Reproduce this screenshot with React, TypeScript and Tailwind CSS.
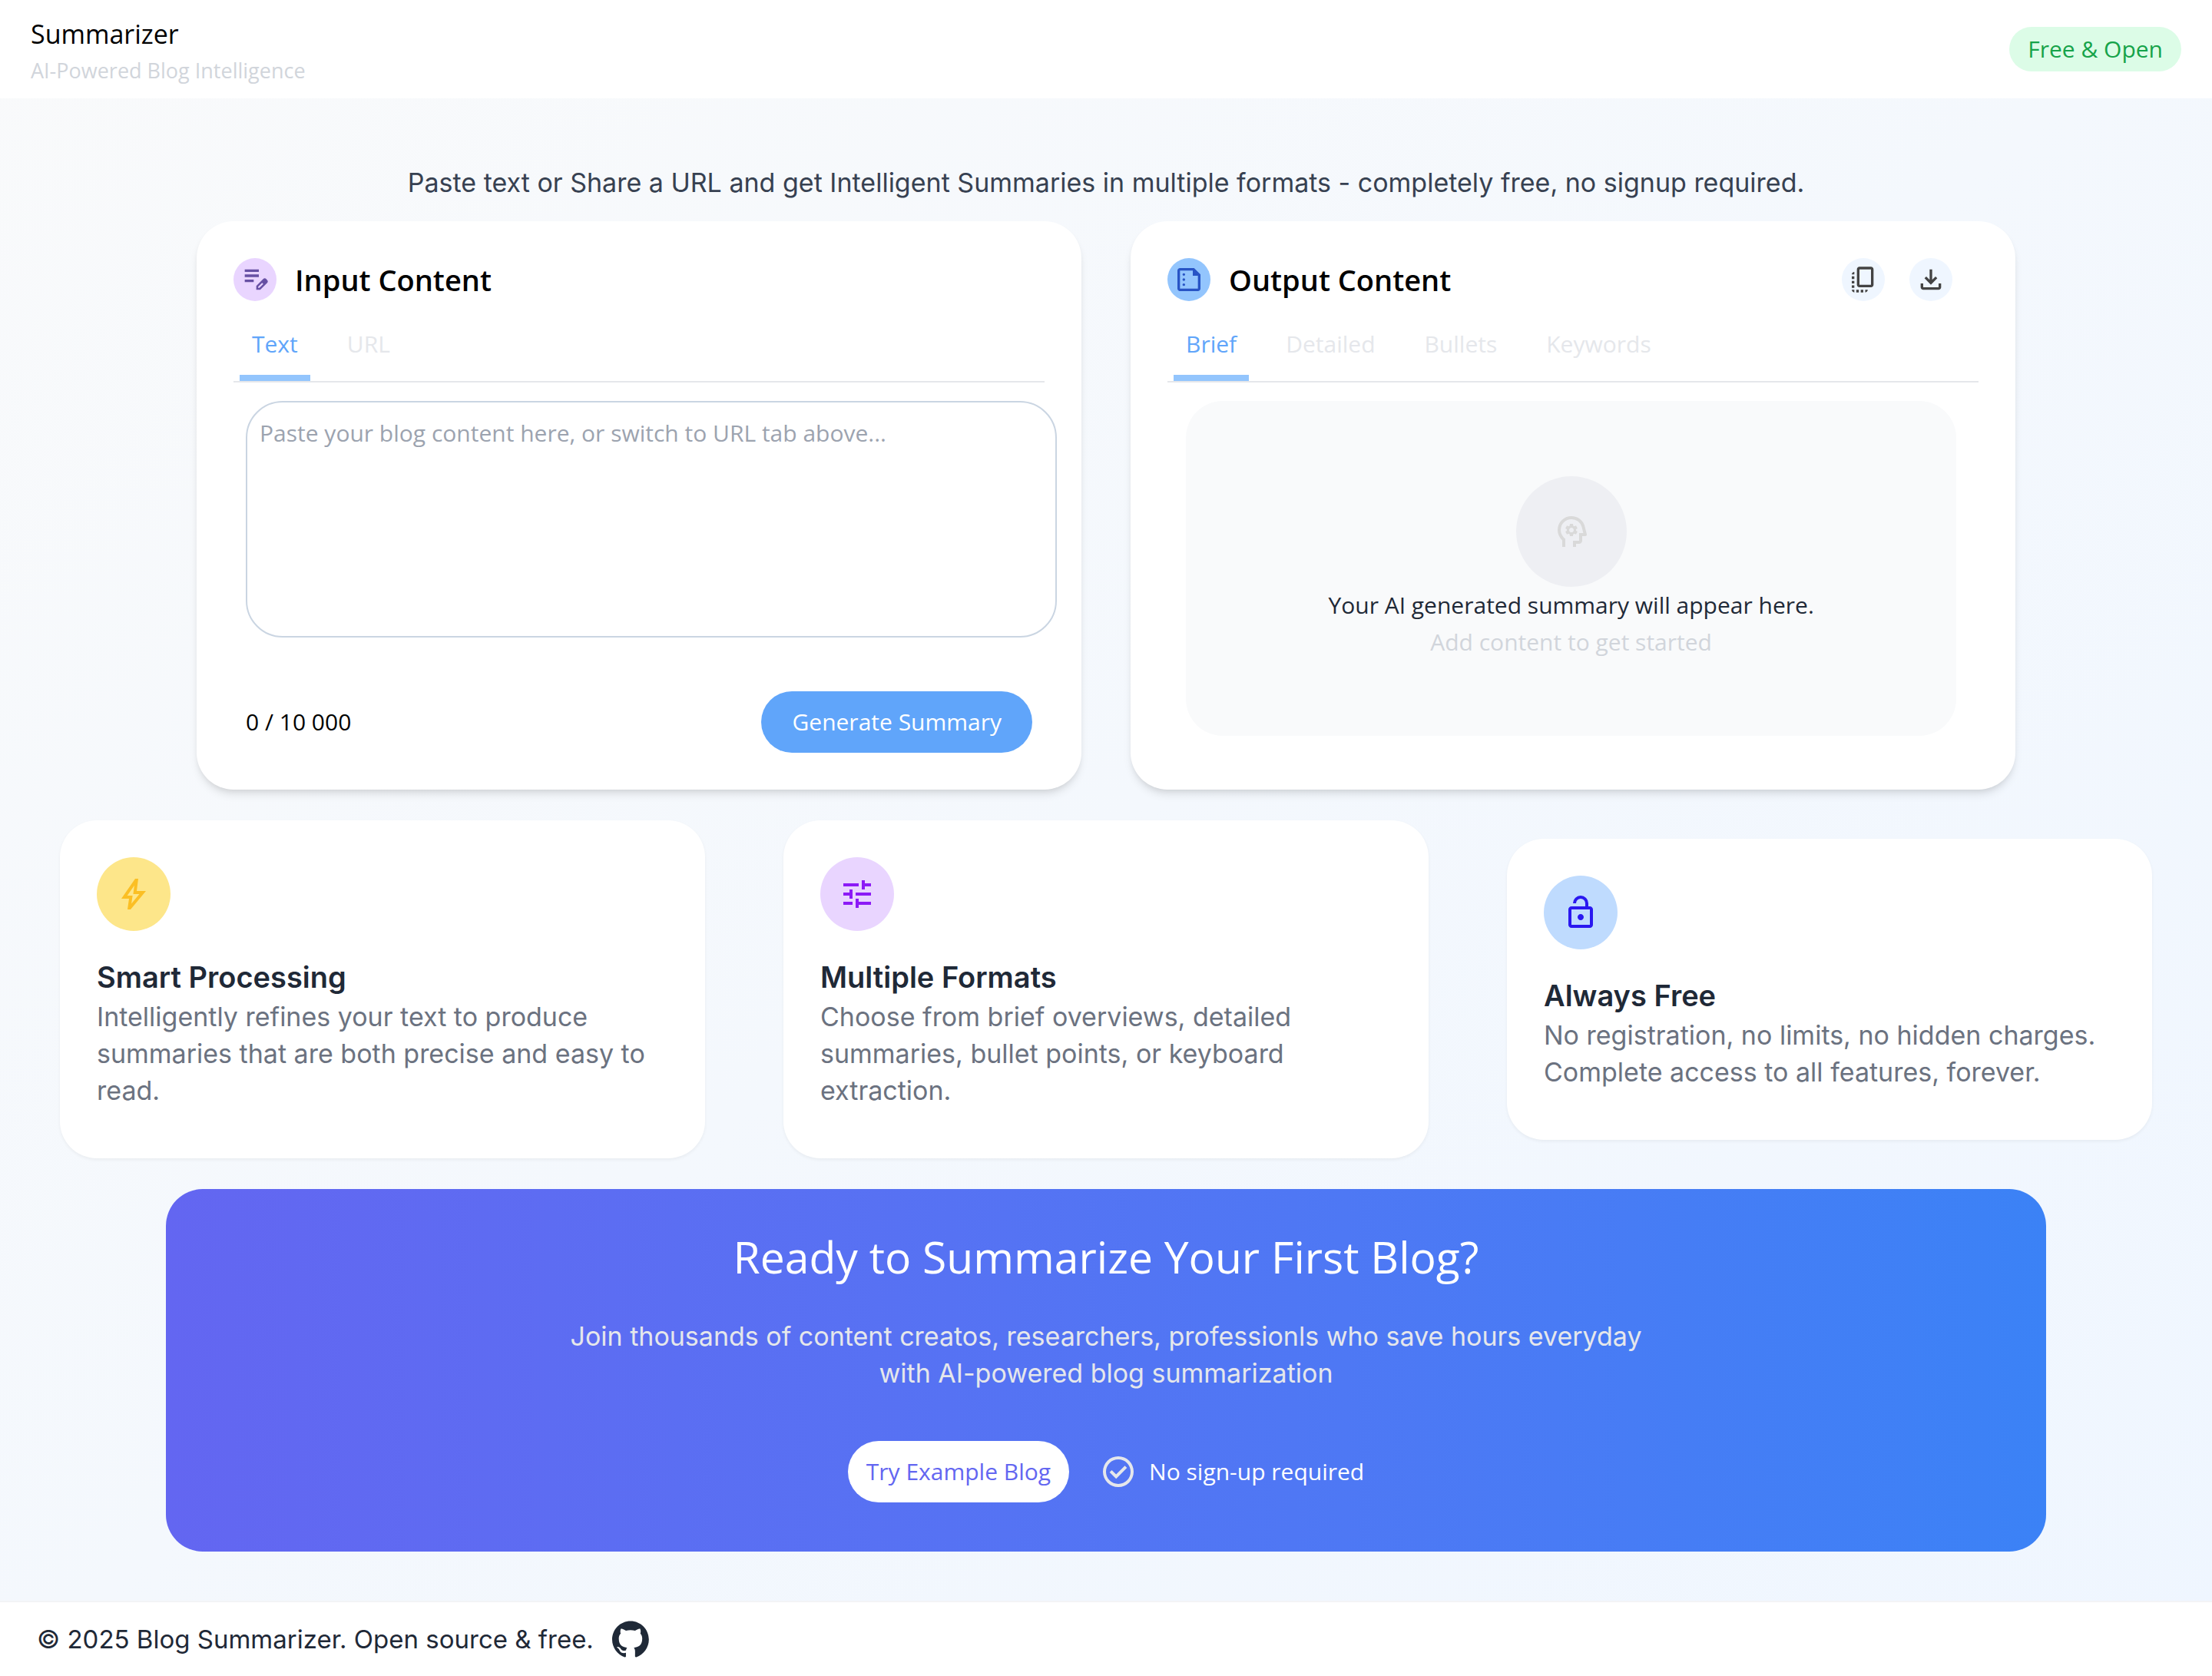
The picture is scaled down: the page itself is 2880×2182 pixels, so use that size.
import React, { useState } from "react";

const ui = "font-['Open_Sans','Noto_Sans',sans-serif]";
const geo = "font-['Inter','Noto_Sans',sans-serif]";

const icons = {
  editNote:
    "M160-400v-80h280v80H160Zm0-160v-80h440v80H160Zm0-160v-80h440v80H160Zm360 560v-123l221-220q9-9 20-13t22-4q12 0 23 4.5t20 13.5l37 37q8 9 12.5 20t4.5 22q0 11-4 22.5T863-380L643-160H520Zm300-263-37-37 37 37ZM580-220h38l121-122-18-19-19-18-122 121v38Zm141-141-19-18 37 37-18-19Z",
  summarize:
    "M320-600q17 0 28.5-11.5T360-640q0-17-11.5-28.5T320-680q-17 0-28.5 11.5T280-640q0 17 11.5 28.5T320-600Zm0 160q17 0 28.5-11.5T360-480q0-17-11.5-28.5T320-520q-17 0-28.5 11.5T280-480q0 17 11.5 28.5T320-440Zm0 160q17 0 28.5-11.5T360-320q0-17-11.5-28.5T320-360q-17 0-28.5 11.5T280-320q0 17 11.5 28.5T320-280ZM200-120q-33 0-56.5-23.5T120-200v-560q0-33 23.5-56.5T200-840h440l200 200v440q0 33-23.5 56.5T760-120H200Zm0-80h560v-400H600v-160H200v560Zm0-560v160-160 560-560Z",
  download:
    "M480-320 280-520l56-58 104 104v-326h80v326l104-104 56 58-200 200ZM240-160q-33 0-56.5-23.5T160-240v-120h80v120h480v-120h80v120q0 33-23.5 56.5T720-160H240Z",
  psychology:
    "M240-80v-172q-57-52-88.5-121.5T120-520q0-150 105-255t255-105q125 0 221.5 73.5T827-615l52 205q5 19-7 34.5T840-360h-80v120q0 33-23.5 56.5T680-160h-80v80h-80v-160h160v-200h108l-38-155q-23-91-98-148t-172-57q-116 0-198 81t-82 197q0 60 24.5 114t69.5 96l26 24v208h-80Zm254-360Zm-54 80h80l6-50q8-3 14.5-7t11.5-9l46 20 40-68-40-30q2-8 2-16t-2-16l40-30-40-68-46 20q-5-5-11.5-9t-14.5-7l-6-50h-80l-6 50q-8 3-14.5 7t-11.5 9l-46-20-40 68 40 30q-2 8-2 16t2 16l-40 30 40 68 46-20q5 5 11.5 9t14.5 7l6 50Zm40-100q-25 0-42.5-17.5T420-520q0-25 17.5-42.5T480-580q25 0 42.5 17.5T540-520q0 25-17.5 42.5T480-460Z",
  bolt: "m422-232 207-248H469l29-227-185 267h139l-30 208ZM320-80l40-280H160l360-520h80l-40 320h240L400-80h-80Zm151-390Z",
  tune: "M440-120v-240h80v80h320v80H520v80h-80Zm-320-80v-80h240v80H120Zm160-160v-80H120v-80h160v-80h80v240h-80Zm160-80v-80h400v80H440Zm160-160v-240h80v80h160v80H680v80h-80Zm-480-80v-80h400v80H120Z",
  lockOpen:
    "M240-640h360v-80q0-50-35-85t-85-35q-50 0-85 35t-35 85h-80q0-83 58.5-141.5T480-920q83 0 141.5 58.5T680-720v80h40q33 0 56.5 23.5T800-560v400q0 33-23.5 56.5T720-80H240q-33 0-56.5-23.5T160-160v-400q0-33 23.5-56.5T240-640Zm0 480h480v-400H240v400Zm240-120q33 0 56.5-23.5T560-360q0-33-23.5-56.5T480-440q-33 0-56.5 23.5T400-360q0 33 23.5 56.5T480-280ZM240-160v-400 400Z",
  checkCircle:
    "m424-296 282-282-56-56-226 226-114-114-56 56 170 170Zm56 216q-83 0-156-31.5T197-197q-54-54-85.5-127T80-480q0-83 31.5-156T197-763q54-54 127-85.5T480-880q83 0 156 31.5T763-763q54 54 85.5 127T880-480q0 83-31.5 156T763-197q-54 54-127 85.5T480-80Zm0-80q134 0 227-93t93-227q0-134-93-227t-227-93q-134 0-227 93t-93 227q0 134 93 227t227 93Zm0-320Z",
};

function Icon({ d, className }: { d: string; className: string }) {
  return (
    <svg viewBox="0 -960 960 960" fill="currentColor" className={className} aria-hidden="true">
      <path d={d} />
    </svg>
  );
}

function CopyAllIcon() {
  return (
    <svg viewBox="0 0 24 24" fill="currentColor" className="size-10" aria-hidden="true">
      <path d="M18 2H9c-1.1 0-2 .9-2 2v12c0 1.1.9 2 2 2h9c1.1 0 2-.9 2-2V4c0-1.1-.9-2-2-2zm0 14H9V4h9v12zM3 15v-2h2v2H3zm0-5.5h2v2H3v-2zM10 20h2v2h-2v-2zm-7-1.5v-2h2v2H3zM5 22c-1.1 0-2-.9-2-2h2v2zm3.5 0h-2v-2h2v2zm5 0v-2h2c0 1.1-.9 2-2 2zM5 6v2H3c0-1.1.9-2 2-2z" />
    </svg>
  );
}

function GitHubIcon() {
  return (
    <svg viewBox="0 0 98 96" fill="currentColor" className="size-12" aria-hidden="true">
      <path
        fillRule="evenodd"
        clipRule="evenodd"
        d="M48.854 0C21.839 0 0 22 0 49.217c0 21.756 13.993 40.172 33.405 46.69 2.427.49 3.316-1.059 3.316-2.362 0-1.141-.08-5.052-.08-9.127-13.59 2.934-16.42-5.867-16.42-5.867-2.184-5.704-5.42-7.17-5.42-7.17-4.448-3.015.324-3.015.324-3.015 4.934.326 7.523 5.052 7.523 5.052 4.367 7.496 11.404 5.378 14.235 4.074.404-3.178 1.699-5.378 3.074-6.6-10.839-1.141-22.243-5.378-22.243-24.283 0-5.378 1.94-9.778 5.014-13.2-.485-1.222-2.184-6.275.486-13.038 0 0 4.125-1.304 13.426 5.052a46.97 46.97 0 0 1 12.214-1.63c4.125 0 8.33.571 12.213 1.63 9.302-6.356 13.427-5.052 13.427-5.052 2.67 6.763.97 11.816.485 13.038 3.155 3.422 5.015 7.822 5.015 13.2 0 18.905-11.404 23.06-22.324 24.283 1.78 1.548 3.316 4.481 3.316 9.126 0 6.6-.08 11.897-.08 13.526 0 1.304.89 2.853 3.316 2.364 19.412-6.52 33.405-24.935 33.405-46.691C97.707 22 75.788 0 48.854 0z"
      />
    </svg>
  );
}

function Tabs({
  label,
  tabs,
  active,
  onSelect,
}: {
  label: string;
  tabs: string[];
  active: string;
  onSelect: (tab: string) => void;
}) {
  return (
    <div role="tablist" aria-label={label} className="mt-8 flex gap-8 border-b-2 border-gray-200 px-2">
      {tabs.map((tab) => (
        <button
          key={tab}
          type="button"
          role="tab"
          aria-selected={tab === active}
          onClick={() => onSelect(tab)}
          className={
            tab === active
              ? "border-b-8 border-[#93c5fd] px-4 pb-4 text-[#60a5fa]"
              : "border-b-8 border-transparent px-4 pb-4 text-gray-200"
          }
        >
          {tab}
        </button>
      ))}
    </div>
  );
}

const cardClass =
  "flex-1 rounded-[48px] bg-white p-12 shadow-[0_8px_12px_-2px_rgba(0,0,0,0.1),0_4px_8px_-4px_rgba(0,0,0,0.1)]";

function InputCard() {
  const [tab, setTab] = useState("Text");
  const [text, setText] = useState("");
  return (
    <section className={cardClass}>
      <div className="flex items-center gap-6">
        <span className="flex size-14 items-center justify-center rounded-full bg-[#e9d5ff] text-[#6750a4]">
          <Icon d={icons.editNote} className="size-10" />
        </span>
        <h2 className="text-[38px] leading-14 font-semibold text-black">Input Content</h2>
      </div>
      <Tabs label="Input type" tabs={["Text", "URL"]} active={tab} onSelect={setTab} />
      <textarea
        aria-label="Blog content"
        value={text}
        onChange={(e) => setText(e.target.value)}
        placeholder="Paste your blog content here, or switch to URL tab above..."
        className="mt-6 ml-4 block h-[308px] w-full resize-none rounded-[48px] border-2 border-slate-300 bg-white p-4 text-black placeholder:text-[#9ca3af]"
      />
      <div className="mx-4 mt-[70px] flex items-center justify-between">
        <p className="text-black">{text.length} / 10 000</p>
        <button type="button" className="rounded-full bg-[#60a5fa] px-10 py-4 text-white">
          Generate Summary
        </button>
      </div>
    </section>
  );
}

function OutputCard() {
  const [tab, setTab] = useState("Brief");
  return (
    <section className={cardClass}>
      <div className="flex items-center gap-6">
        <span className="flex size-14 items-center justify-center rounded-full bg-[#93c5fd] text-[#2854c5]">
          <Icon d={icons.summarize} className="size-10" />
        </span>
        <h2 className="text-[38px] leading-14 font-semibold text-black">Output Content</h2>
        <div className="ml-auto flex gap-8 pr-[34px] text-[#434343]">
          <button
            type="button"
            aria-label="Copy summary"
            className="flex size-14 items-center justify-center rounded-full bg-[#eff6ff]"
          >
            <CopyAllIcon />
          </button>
          <button
            type="button"
            aria-label="Download summary"
            className="flex size-14 items-center justify-center rounded-full bg-[#eff6ff]"
          >
            <Icon d={icons.download} className="size-10" />
          </button>
        </div>
      </div>
      <Tabs
        label="Summary format"
        tabs={["Brief", "Detailed", "Bullets", "Keywords"]}
        active={tab}
        onSelect={setTab}
      />
      <div className="mt-6 ml-6 flex w-[95%] flex-col items-center rounded-[48px] bg-[#f9fafb] py-[98px]">
        <span className="flex size-36 items-center justify-center rounded-full bg-[#eeeff3] text-[#d9d9d9]">
          <Icon d={icons.psychology} className="size-12" />
        </span>
        <p className="text-[#1f2937]">Your AI generated summary will appear here.</p>
        <p className="text-[#d1d5db]">Add content to get started</p>
      </div>
    </section>
  );
}

const features = [
  {
    title: "Smart Processing",
    text: "Intelligently refines your text to produce summaries that are both precise and easy to read.",
    icon: icons.bolt,
    tone: "bg-[#fde68a] text-[#fbbf24]",
  },
  {
    title: "Multiple Formats",
    text: "Choose from brief overviews, detailed summaries, bullet points, or keyboard extraction.",
    icon: icons.tune,
    tone: "bg-[#e9d5ff] text-[#8c1af6]",
  },
  {
    title: "Always Free",
    text: "No registration, no limits, no hidden charges. Complete access to all features, forever.",
    icon: icons.lockOpen,
    tone: "bg-[#bfdbfe] text-[#2a18f0]",
  },
];

export default function App() {
  return (
    <div
      className={`${ui} flex min-h-screen flex-col bg-linear-to-br from-[#f9fafb] to-[#eff6ff] text-[30px] leading-12`}
    >
      <header className="flex items-center justify-between bg-white px-10 py-4">
        <div>
          <h1 className="text-[34px] leading-14 text-black">Summarizer</h1>
          <p className="text-[27px] leading-10 text-[#d1d5db]">AI-Powered Blog Intelligence</p>
        </div>
        <span className="rounded-full bg-[#dcfce7] px-6 py-[5px] text-[#16a34a]">Free &amp; Open</span>
      </header>

      <main className="flex-1">
        <p className={`${geo} pt-[86px] text-center text-[34px] leading-12 text-[#374151]`}>
          Paste text or Share a URL and get Intelligent Summaries in multiple formats - completely free, no signup
          required.
        </p>

        <div className="mt-[26px] flex gap-16 px-64">
          <InputCard />
          <OutputCard />
        </div>

        <div className={`${geo} mt-10 grid grid-cols-3 items-center gap-[102px] px-[78px]`}>
          {features.map((f) => (
            <article
              key={f.title}
              className="rounded-[48px] bg-white px-12 pt-12 pb-16 shadow-[0_2px_4px_0_rgba(0,0,0,0.05)]"
            >
              <span className={`${f.tone} flex size-24 items-center justify-center rounded-full`}>
                <Icon d={f.icon} className="size-12" />
              </span>
              <h3 className="mt-8 text-[38px] leading-14 font-semibold text-[#1f2937]">{f.title}</h3>
              <p className="text-[34px] leading-12 text-[#6b7280]">{f.text}</p>
            </article>
          ))}
        </div>

        <section className="mx-auto mt-10 flex w-[85%] flex-col items-center rounded-[48px] bg-linear-to-r from-[#6366f1] to-[#3b82f6] pt-12 pb-16 text-white">
          <h2 className="text-[57px] leading-20">Ready to Summarize Your First Blog?</h2>
          <p className={`${geo} mt-10 max-w-[1430px] text-center text-[34px] leading-12 text-[#e5e7eb]`}>
            Join thousands of content creatos, researchers, professionls who save hours everyday with AI-powered blog
            summarization
          </p>
          <div className="mt-16 flex items-center gap-10">
            <button type="button" className="rounded-full bg-white px-6 py-4 text-[#6366f1]">
              Try Example Blog
            </button>
            <p className="flex items-center gap-4">
              <Icon d={icons.checkCircle} className="size-12 text-[#e5e7eb]" />
              No sign-up required
            </p>
          </div>
        </section>
      </main>

      <footer className="mt-16 flex items-center gap-6 border-t-2 border-[#f3f4f6] bg-white px-12 py-6 text-[#1f2937]">
        <p className={`${geo} text-[33px] leading-12`}>© 2025 Blog Summarizer. Open source &amp; free.</p>
        <a href="https://github.com" aria-label="GitHub repository">
          <GitHubIcon />
        </a>
      </footer>
    </div>
  );
}
